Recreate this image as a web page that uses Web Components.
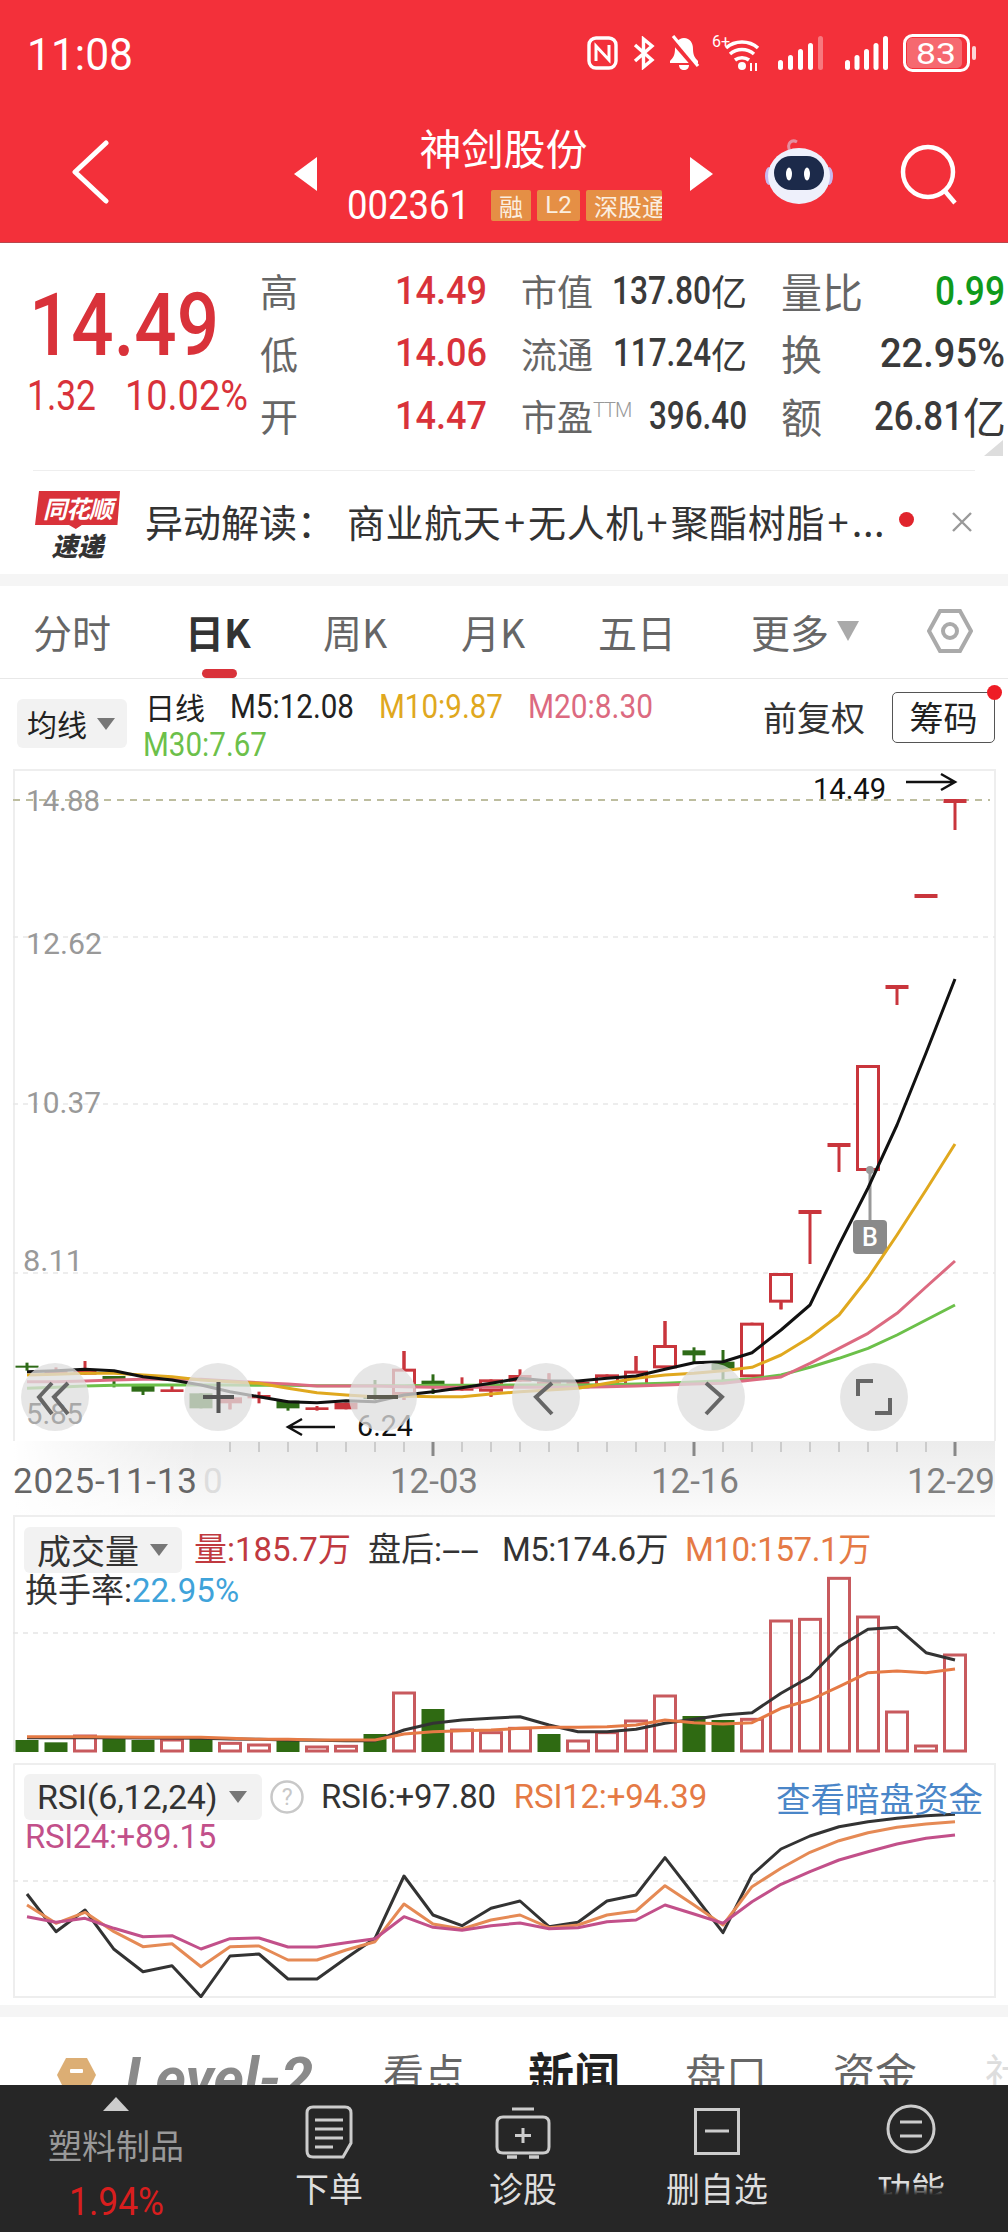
<!DOCTYPE html>
<html lang="zh"><head><meta charset="utf-8"><title>神剑股份</title>
<style>
html,body{margin:0;padding:0;background:#fff}
body{width:1008px;height:2232px;overflow:hidden;font-family:"Roboto","Noto Sans CJK SC",sans-serif}
x-app{display:block;width:1008px;height:2232px;overflow:hidden;position:relative}
</style></head><body>
<x-app>
  <x-statusbar></x-statusbar>
  <x-navbar></x-navbar>
  <x-quote>
    <x-qcell style="--ls:38px"><span slot="label">高</span><x-n class="r" t="14.49" w="92" fs="39" wt="500"></x-n></x-qcell>
    <x-qcell style="--ls:36px"><span slot="label">市值</span><x-n t="137.80" w="99" fs="39" wt="500"></x-n><small>亿</small></x-qcell>
    <x-qcell style="--ls:41px"><span slot="label">量比</span><x-n style="color:#0f9a1c" t="0.99" w="70" fs="41" wt="500"></x-n></x-qcell>
    <x-qcell style="--ls:38px"><span slot="label">低</span><x-n class="r" t="14.06" w="92" fs="39" wt="500"></x-n></x-qcell>
    <x-qcell style="--ls:36px"><span slot="label">流通</span><x-n t="117.24" w="98" fs="39" wt="500"></x-n><small>亿</small></x-qcell>
    <x-qcell style="--ls:41px"><span slot="label">换</span><x-n t="22.95%" w="125" fs="41" wt="500"></x-n></x-qcell>
    <x-qcell style="--ls:38px"><span slot="label">开</span><x-n class="r" t="14.47" w="92" fs="39" wt="500"></x-n></x-qcell>
    <x-qcell style="--ls:36px"><span slot="label">市盈<sup>TTM</sup></span><x-n t="396.40" w="98" fs="39" wt="500"></x-n></x-qcell>
    <x-qcell style="--ls:41px"><span slot="label">额</span><x-n t="26.81" w="89" fs="41" wt="500"></x-n><small style="font-size:43px;margin-right:-1px">亿</small></x-qcell>
  </x-quote>
  <x-news></x-news>
  <x-tabs></x-tabs>
  <x-legend></x-legend>
  <x-kchart></x-kchart>
  <x-timeaxis></x-timeaxis>
  <x-volume></x-volume>
  <x-rsi></x-rsi>
  <x-subtabs></x-subtabs>
  <x-dock></x-dock>
</x-app>
<script>
const CJK='"Noto Sans CJK SC",sans-serif';
customElements.define('x-n',class extends HTMLElement{
  constructor(){super();this.attachShadow({mode:'open'});}
  connectedCallback(){
    const w=+this.getAttribute('w'),fs=+this.getAttribute('fs'),t=this.getAttribute('t'),h=Math.round(fs*1.2);
    const wt=this.getAttribute('wt')||400;
    this.shadowRoot.innerHTML=`<style>:host{display:inline-block;width:${w}px;height:${h}px;vertical-align:middle;line-height:0;flex:none}svg{display:block;overflow:visible}</style><svg width="${w}" height="${h}"><text x="0" y="${h/2+.355*fs}" textLength="${w}" lengthAdjust="spacingAndGlyphs" font-family="Roboto" font-size="${fs}" font-weight="${wt}" fill="currentColor">${t}</text></svg>`;
  }
});
function def(name,html){customElements.define(name,class extends HTMLElement{
  constructor(){super();this.attachShadow({mode:'open'}).innerHTML=typeof html==='function'?html():html;}
});}
const X=k=>27+29*k;
const pts=(arr,f)=>arr.map((v,k)=>X(k)+','+f(v).toFixed(1)).join(' ');
const line=(arr,f,c,w)=>`<polyline points="${pts(arr,f)}" fill="none" stroke="${c}" stroke-width="${w}" stroke-linejoin="round"/>`;
const chev=`<svg width="18" height="14" viewBox="0 0 18 14"><path d="M0 1H18L9 13Z" fill="#777"/></svg>`;

def('x-statusbar',`<style>
:host{display:flex;align-items:center;height:106px;background:#f3303a;color:#fff;padding:0 31px 0 27px;box-sizing:border-box}
.t{flex:1;display:flex;margin-top:2px}
svg{display:block;flex:none}
</style>
<div class="t"><x-n t="11:08" w="106" fs="45"></x-n></div>
<svg width="31" height="34" viewBox="0 0 31 34" fill="none" stroke="#fff" stroke-width="3.4"><rect x="2" y="2" width="27" height="30" rx="7"/><path d="M9 25V10L22 24V9" stroke-width="3"/></svg>
<svg style="margin-left:14px" width="23" height="34" viewBox="0 0 23 34" fill="none" stroke="#fff" stroke-width="3.4"><path d="M3 9 20 24 11.5 31V3L20 10 3 25"/></svg>
<svg style="margin-left:13px" width="32" height="36" viewBox="0 0 32 36" fill="#fff"><path d="M16 3c-6 0-9 5-9 11 0 6-2 9-5 12v2h28v-2c-3-3-5-6-5-12 0-6-3-11-9-11Z"/><path d="M11 30h10c0 3-2 5-5 5s-5-2-5-5Z"/><path d="M3 3 29 33" stroke="#f3303a" stroke-width="6"/><path d="M5 1 30 31" stroke="#fff" stroke-width="3.2"/></svg>
<svg style="margin-left:12px" width="48" height="36" viewBox="0 0 48 36" fill="none" stroke="#fff" stroke-width="3.6"><text x="0" y="12" fill="#fff" stroke="none" font-family="Roboto" font-size="16">6+</text><path d="M14 13C23 5 37 5 46 13M18 19C25 13 35 13 42 19M23 25C27 22 33 22 37 25"/><circle cx="30" cy="31" r="4" fill="#fff" stroke="none"/><path d="M39 28v8M44 28v8" stroke-width="2"/></svg>
<svg style="margin-left:18px" width="45" height="34" viewBox="0 0 45 34" fill="#fff"><rect x="0" y="24" width="5" height="10" rx="2.5"/><rect x="10" y="19" width="5" height="15" rx="2.5"/><rect x="20" y="13" width="5" height="21" rx="2.5"/><rect x="30" y="7" width="5" height="27" rx="2.5"/><rect x="40" y="0" width="5" height="34" rx="2.5" opacity=".35"/></svg>
<svg style="margin-left:22px" width="43" height="34" viewBox="0 0 43 34" fill="#fff"><rect x="0" y="24" width="5" height="10" rx="2.5"/><rect x="9.5" y="19" width="5" height="15" rx="2.5"/><rect x="19" y="13" width="5" height="21" rx="2.5"/><rect x="28.5" y="7" width="5" height="27" rx="2.5"/><rect x="38" y="0" width="5" height="34" rx="2.5"/></svg>
<svg style="margin-left:15px" width="74" height="38" viewBox="0 0 74 38"><rect x="1.5" y="1.5" width="64" height="35" rx="8" fill="none" stroke="#fff" stroke-width="3"/><rect x="4" y="4" width="55" height="30" rx="5" fill="#fff" opacity=".28"/><rect x="69" y="12" width="4" height="14" rx="2" fill="#fff" opacity=".8"/><text x="33" y="30" text-anchor="middle" fill="#fff" font-family="Roboto" font-size="30" textLength="40" lengthAdjust="spacingAndGlyphs">83</text></svg>`);

def('x-navbar',`<style>
:host{display:grid;grid-template-columns:294px 23px 373px 23px 1fr;align-items:center;height:137px;background:#f3303a;color:#fff;border-bottom:1px solid #b9474c;box-sizing:border-box}
.mid{display:flex;flex-direction:column;align-self:start;padding-top:18px}
.n{font:400 42px/46px ${CJK};text-align:center}
.c{display:flex;align-items:center;height:34px;margin-top:18px;padding-left:30px}
.code{margin-right:21px}
.tag{background:#e58f45;height:31px;border-radius:2px;font:400 24px/31px ${CJK};color:#fbeee0;margin-right:6px;text-align:center}
.l2{width:43px;font-family:Roboto,sans-serif}
.clip{width:76px;overflow:hidden;white-space:nowrap;margin-right:0;text-align:left;padding-left:8px;box-sizing:border-box}
.right{display:flex;align-items:center;justify-content:flex-start}
svg{display:block}
</style>
<svg style="margin-left:72px;margin-top:-4px" width="38" height="64" viewBox="0 0 38 64" fill="none" stroke="#fff" stroke-width="5" stroke-linecap="round" stroke-linejoin="round"><path d="M34 3 3 32 34 61"/></svg>
<svg width="23" height="34" viewBox="0 0 23 34"><path d="M23 0V34L0 17Z" fill="#fff"/></svg>
<div class="mid"><div class="n">神剑股份</div>
<div class="c"><x-n class="code" t="002361" w="123" fs="40"></x-n><span class="tag" style="width:40px">融</span><span class="tag l2">L2</span><span class="tag clip">深股通</span></div></div>
<svg width="23" height="34" viewBox="0 0 23 34"><path d="M0 0V34L23 17Z" fill="#fff"/></svg>
<div class="right">
<svg style="margin-left:51px;margin-top:-4px" width="70" height="66" viewBox="0 0 70 66"><path d="M26 12C22 4 28 0 33 3" fill="none" stroke="#e48fa0" stroke-width="3"/><ellipse cx="5" cy="37" rx="4" ry="9" fill="#c7b7ee"/><ellipse cx="65" cy="37" rx="4" ry="9" fill="#c7b7ee"/><ellipse cx="35" cy="37" rx="31" ry="28" fill="#eef0fb"/><rect x="10" y="17" width="50" height="34" rx="17" fill="#1c2a4a"/><ellipse cx="25" cy="35" rx="3" ry="6.5" fill="#fff"/><ellipse cx="43" cy="35" rx="3" ry="6.5" fill="#fff"/></svg>
<svg style="margin-left:66px" width="60" height="62" viewBox="0 0 60 62" fill="none" stroke="#fff" stroke-width="4.5"><circle cx="28" cy="29" r="25"/><path d="M44 47 55 60"/></svg>
</div>`);

def('x-quote',`<style>
:host{display:grid;grid-template-columns:260px 1fr;height:227px;box-sizing:border-box;background:#fff;position:relative;color:#3a3a3a}
.left{padding-top:29px}
.p{color:#d9323a;padding-left:29px;height:104px}
.s{color:#d9323a;display:flex;margin-top:-6px;padding-left:27px}
.s x-n+x-n{margin-left:29px}
.g{display:grid;grid-template-columns:227px 226px 224px;column-gap:34px;padding-top:16px;align-content:start}
.tri{position:absolute;right:5px;top:197px}
</style>
<div class="left"><div class="p"><x-n t="14.49" w="190" fs="87" wt="500"></x-n></div><div class="s"><x-n t="1.32" w="69" fs="42"></x-n><x-n t="10.02%" w="123" fs="42"></x-n></div></div>
<div class="g"><slot></slot></div>
<svg class="tri" width="19" height="16" viewBox="0 0 19 16"><path d="M19 0V16H0Z" fill="#ddd"/></svg>`);

def('x-qcell',`<style>
:host{display:flex;justify-content:space-between;align-items:center;height:62.5px;white-space:nowrap}
.l{font:400 var(--ls,38px)/1 ${CJK};color:#666}
::slotted(small){font:400 36px/1 ${CJK}}
::slotted(.r){color:#d9323a}
.v{display:flex;align-items:center}
</style><div class="l"><slot name="label"></slot></div><div class="v"><slot></slot></div>`);
const ttm=document.querySelector('x-qcell span[slot=label] sup');
ttm.style.cssText='font:300 20px Roboto,sans-serif;color:#999;vertical-align:14px;letter-spacing:-1px;line-height:0';

def('x-news',`<style>
:host{display:flex;align-items:center;height:104px;box-sizing:border-box;padding:0 0 0 35px;position:relative;background:#fff}
:host::before{content:"";position:absolute;left:33px;right:33px;top:0;border-top:1px solid #eee}
.logo{width:85px;flex:none;display:flex;flex-direction:column;align-items:center;margin-top:6px}
.tagb{width:85px;height:38px;background:#d9323a;clip-path:polygon(4px 0,100% 0,97% 34px,55% 34px,48% 38px,40% 34px,0 34px);color:#fff;font:italic 700 24px/33px ${CJK};text-align:center;letter-spacing:-1px}
.sd{font:italic 900 26px/28px ${CJK};color:#333;margin-top:2px}
.t{font:400 38px/1 ${CJK};color:#333;margin-left:25px;white-space:nowrap;width:745px;flex:none;display:flex;margin-top:-2px}
.a{width:202px;flex:none}
.b{letter-spacing:.6px}
.b i{font-style:normal;padding:0 2.5px}
.dot{width:15px;height:15px;border-radius:50%;background:#e0242c;margin-left:9px;margin-top:-6px;flex:none}
svg{margin-left:37px;flex:none}
</style>
<div class="logo"><div class="tagb">同花顺</div><div class="sd">速递</div></div>
<div class="t"><span class="a">异动解读：</span><span class="b">商业航天<i>+</i>无人机<i>+</i>聚酯树脂<i>+</i>...</span></div>
<div class="dot"></div>
<svg width="22" height="22" viewBox="0 0 22 22" fill="none" stroke="#999" stroke-width="2.4"><path d="M2 2 20 20M20 2 2 20"/></svg>`);

def('x-tabs',`<style>
:host{display:block;height:105px;box-sizing:border-box;border-top:12px solid #f5f5f5;border-bottom:1px solid #e8e8e8;position:relative;font:400 39px/1 ${CJK};color:#666}
.w{display:grid;grid-template-columns:152px 138px 138px 137px 153px 176px 1fr;height:92px;align-items:center;padding-left:33px;box-sizing:border-box;white-space:nowrap;margin-top:-1px}
.on{font-weight:700;color:#333}
.bar{position:absolute;left:202px;top:83px;width:35px;height:9px;border-radius:5px;background:#d9323a}
.more{display:flex;align-items:center}
svg{display:block}
</style>
<div class="w"><div>分时</div><div class="on">日K</div><div>周K</div><div>月K</div><div>五日</div>
<div class="more">更多<svg style="margin-left:8px" width="22" height="20" viewBox="0 0 22 20"><path d="M0 0H22L11 20Z" fill="#aaa"/></svg></div>
<svg width="46" height="44" viewBox="0 0 46 44" fill="none" stroke="#aaa" stroke-width="4"><path d="M13 2H33L44 22 33 42H13L2 22Z"/><circle cx="23" cy="22" r="7"/></svg></div>
<div class="bar"></div>`);

def('x-legend',`<style>
:host{display:flex;height:90px;box-sizing:border-box;padding:0 13px 0 17px;background:#fff;color:#222;position:relative}
.chip{width:110px;height:49px;margin-top:20px;background:#f2f2f2;border-radius:6px;display:flex;align-items:center;padding-left:10px;box-sizing:border-box;font:400 30px/1 ${CJK};flex:none}
.chip span{margin-top:-2px}
.chip svg{margin-left:10px}
.txt{margin-left:16px;padding-top:8px;width:600px;display:flex;flex-wrap:wrap;column-gap:25px;row-gap:0;align-content:flex-start;align-items:center}
.l2{height:38px;display:flex;align-items:center}
.cn{font:400 30px/38px ${CJK};margin-left:2px;width:60px}
.br{flex-basis:100%;height:0}
.fq{font:400 34px/38px ${CJK};color:#333;margin-left:auto;margin-top:19px;height:40px}
.btn{position:relative;width:103px;height:51px;margin:13px 0 0 27px;box-sizing:border-box;border:1px solid #555;border-radius:5px;text-align:center;font:400 34px/48px ${CJK};flex:none}
.dot{position:absolute;right:-8px;top:-8px;width:15px;height:15px;background:#ee1c25;border-radius:50%}
</style>
<div class="chip"><span>均线</span>${chev}</div>
<div class="txt"><span class="cn">日线</span><span class="l2"><x-n t="M5:12.08" w="124" fs="33"></x-n></span><span class="l2" style="color:#e0a81e"><x-n t="M10:9.87" w="124" fs="33"></x-n></span><span class="l2" style="color:#dc6a80"><x-n t="M20:8.30" w="125" fs="33"></x-n></span><span class="br"></span><span class="l2" style="color:#6cc04a"><x-n t="M30:7.67" w="124" fs="33"></x-n></span></div>
<div class="fq">前复权</div><div class="btn">筹码<div class="dot"></div></div>`);

def('x-kchart',()=>{
 const R='#c9353c',G='#2e6b17';
 const P=p=>1280+p/3;
 const c=[[257,263,248,272,'g'],[272,284,262,284,'f'],[272,284,243,284,'f'],[288,300,288,322,'g'],[315,335,315,345,'g'],[328,336,316,336,'f'],[340,385,340,385,'g'],[352,370,352,388,'h'],[345,355,335,370,'f'],[362,385,362,392,'g'],[382,390,378,392,'f'],[368,388,368,388,'f'],[345,357,300,360,'g'],[266,345,213,360,'h'],[302,312,283,342,'g'],[322,332,292,332,'f'],[298,335,298,350,'h'],[285,305,268,305,'f'],[305,320,280,320,'h'],[305,325,305,325,'f'],[283,320,283,320,'h'],[272,320,228,320,'h'],[195,265,123,265,'h'],[211,226,202,250,'g'],[245,270,210,300,'g'],[128,292,128,292,'h'],[-21,68,-21,88,'h'],[-210,-198,-210,-48,'f'],[-411,-399,-411,-324,'f'],[-645,-327,-645,-327,'h'],[-885,-873,-885,-825,'f'],[-1158,-1146,-1158,-1146,'f'],[-1443,-1431,-1443,-1350,'f']];
 let s='';
 c.forEach((d,k)=>{const x=X(k),col=d[4]=='g'?G:R;
  s+=`<path d="M${x} ${P(d[2])}V${P(d[3])}" stroke="${col}" stroke-width="3"/>`;
  if(d[4]=='h')s+=`<rect x="${x-10.5}" y="${P(d[0])+1.5}" width="21" height="${(d[1]-d[0])/3-3}" fill="#fff" stroke="${col}" stroke-width="3"/><path d="M${x} ${P(d[2])}V${P(d[0])}M${x} ${P(d[1])}V${P(d[3])}" stroke="${col}" stroke-width="3"/>`;
  else s+=`<rect x="${x-11.5}" y="${P(d[0])}" width="23" height="${(d[1]-d[0])/3}" fill="${col}"/>`;
 });
 const bl=[275,272,268,272,290,300,315,335,350,365,368,362,365,345,335,323,310,295,303,303,295,288,268,248,245,218,150,75,-105,-276,-465,-681,-903];
 const or=[285,283,280,280,285,290,300,305,310,325,338,345,350,348,350,350,342,335,330,325,310,295,285,280,272,262,225,172,105,-6,-135,-270,-408];
 const pk=[305,305,303,300,298,298,298,303,308,312,318,318,318,320,322,322,322,322,322,322,320,318,315,312,310,300,291,250,205,160,100,21,-57];
 const gr=[325,322,318,316,315,315,315,315,316,316,317,317,317,317,316,316,316,315,315,315,314,312,310,306,302,296,285,262,235,205,165,120,75];
 const lines=line(gr,P,'#6cc04a',3)+line(pk,P,'#dc6a80',3)+line(or,P,'#e0a81e',3)+line(bl,P,'#111',3);
 const circ=[55,218,383,546,711,874].map(x=>`<circle cx="${x}" cy="1397" r="34" fill="#dedede" opacity=".76"/>`).join('');
 const ic=`<g fill="none" stroke="#666" stroke-width="4"><path d="M52 1383 39 1397 52 1414M68 1383 54 1397 68 1414"/><path d="M203 1397H234M218.500 1382V1413" stroke="#555"/><path d="M367 1397H398" stroke="#5c5c50"/><path d="M552 1383 536 1397 552 1414"/><path d="M706 1383 722 1397 706 1414"/><path d="M858 1396V1381H873M890 1398V1413H875"/></g>`;
 const grid=[937,1104,1273].map(y=>`<path d="M13 ${y}H995" stroke="#e8e8e8" stroke-width="1.500" stroke-dasharray="5 5"/>`).join('');
 const lab=(t,x,y,w)=>`<text x="${x}" y="${y}" font-family="Roboto" font-size="30" fill="#999" textLength="${w}" lengthAdjust="spacingAndGlyphs">${t}</text>`;
 return `<style>:host{display:block;height:672px}svg{display:block}</style>
 <svg width="1008" height="672" viewBox="0 769 1008 672">
 <path d="M14 1441V770H995V1441" fill="none" stroke="#eee" stroke-width="2"/>
 ${grid}
 <path d="M13 800H990" stroke="#bdbd9f" stroke-width="2" stroke-dasharray="7 6"/>
 ${lab('14.88',26,811,74)}${lab('12.62',26,954,76)}${lab('10.37',26,1113,75)}${lab('8.11',23,1271,60)}
 ${s}
 <path d="M870 1171V1222" stroke="#999" stroke-width="3"/><circle cx="870" cy="1170" r="4" fill="#999"/>
 <rect x="853" y="1220" width="34" height="34" rx="4" fill="#8a8a8a"/><text x="870" y="1246" text-anchor="middle" font-family="Roboto" font-size="25" font-weight="500" fill="#fff">B</text>
 ${lines}
 <text x="813" y="799" font-family="Roboto" font-size="30" fill="#111" textLength="73" lengthAdjust="spacingAndGlyphs">14.49</text>
 <path d="M906 782H954M941 774 955 782 941 790" fill="none" stroke="#111" stroke-width="2.500"/>
 <text x="357" y="1436" font-family="Roboto" font-size="30" fill="#111" textLength="56" lengthAdjust="spacingAndGlyphs">6.24</text>
 <path d="M335 1427H288M302 1419 288 1427 302 1435" fill="none" stroke="#111" stroke-width="2.500"/>
 ${circ}
 <text x="26" y="1424" font-family="Roboto" font-size="30" fill="#a8a8a8" textLength="57" lengthAdjust="spacingAndGlyphs">5.85</text>
 ${ic}
 </svg>`;
});

def('x-timeaxis',()=>{
 let t='';for(let k=7;k<33;k++){const thick=(k==14||k==23||k==32);const x=X(k);t+=`<path d="M${x} 1${thick?'V15':'V11'}" stroke="${thick?'#888':'#ccc'}" stroke-width="${thick?3:2}"/>`;}
 const lab=(s,x,w,c)=>`<text x="${x}" y="52" font-family="Roboto" font-size="35" fill="${c}" textLength="${w}" lengthAdjust="spacing">${s}</text>`;
 return `<style>:host{display:block;height:74px;position:relative;background:linear-gradient(90deg,#fff 13px,rgba(255,255,255,.7) 60px,rgba(255,255,255,0) 200px),linear-gradient(#ececec,#fbfbfb)}
 svg{display:block}</style>
 <svg width="1008" height="74" viewBox="0 0 1008 74"><rect x="995" y="0" width="13" height="74" fill="#fff"/><rect x="0" y="0" width="13" height="74" fill="#fff"/>${t}
 ${lab('2025-11-13',13,184,'#666')}<text x="203" y="52" font-family="Roboto" font-size="35" fill="#ddd">0</text>${lab('12-03',390,88,'#808080')}${lab('12-16',651,88,'#808080')}${lab('12-29',907,88,'#808080')}</svg>`;
});

def('x-volume',()=>{
 const P=p=>1510+p/3,B=1752;
 const tops=[690,697,675,686,690,687,686,697,702,692,708,706,672,546,597,657,665,652,672,690,665,630,555,618,630,625,330,325,202,318,603,705,432];
 const g=new Set([0,1,3,4,6,9,12,14,18,23,24]);
 let s='';tops.forEach((p,k)=>{const x=X(k),y=P(p);
  s+=g.has(k)?`<rect x="${x-11.5}" y="${y}" width="23" height="${B-y}" fill="#2f6a12"/>`:`<rect x="${x-10.5}" y="${y+1}" width="21" height="${B-y-2}" fill="none" stroke="#c85a5e" stroke-width="3"/>`;});
 const bl=[683,683,683,683,684,684,685,687,688,690,691,692,692,660,640,630,625,620,645,665,665,658,640,628,615,608,550,500,410,358,352,428,450];
 const or=[680,680,680,681,682,682,682,685,688,688,690,690,690,672,665,662,660,655,652,652,650,645,630,638,642,638,595,570,530,488,483,488,477];
 return `<style>:host{display:block;height:238px;position:relative;box-sizing:border-box;color:#333}
 svg.c{position:absolute;left:0;top:0}
 .h{position:relative;padding:12px 0 0 24px}
 .r1{display:flex;align-items:center;height:46px;white-space:nowrap;font:400 33px/46px Roboto,${CJK}}
 .chip{width:158px;height:46px;background:#f2f2f2;border-radius:6px;display:flex;align-items:center;padding-left:13px;box-sizing:border-box;font:400 34px/1 ${CJK};flex:none}
 .chip svg{margin-left:11px}
 .r2{font:400 33px/36px Roboto,${CJK};padding-left:1px}
 .f{flex:none;display:flex;align-items:center}
 </style>
 <svg class="c" width="1008" height="238" viewBox="0 1515 1008 238">
 <path d="M14 1752V1516H995" fill="none" stroke="#eee" stroke-width="2"/><path d="M13 1633H995" stroke="#e5e5e5" stroke-width="1.500" stroke-dasharray="5 5"/>
 ${s}${line(bl,P,'#333',3)}${line(or,P,'#e57a45',3)}</svg>
 <div class="h"><div class="r1"><div class="chip">成交量${chev}</div><span class="f" style="color:#c0393f;margin-left:12px;width:174px">量:185.7万</span><span class="f" style="width:134px">盘后:<x-n t="--" w="37" fs="33"></x-n></span><span class="f" style="width:183px;letter-spacing:-.6px">M5:174.6万</span><span class="f" style="color:#e57a45;letter-spacing:-.4px">M10:157.1万</span></div>
 <div class="r2">换手率:<span style="color:#3fa3da">22.95%</span></div></div>`;
});

def('x-rsi',()=>{
 const P=p=>1750+p/3;
 const bl=[432,545,480,598,665,647,740,618,612,687,687,625,565,378,495,527,475,453,530,517,453,435,323,435,548,375,297,258,230,215,205,197,193];
 const or=[465,520,487,545,590,581,650,590,588,630,630,600,575,462,522,537,510,495,533,525,495,483,407,465,525,410,355,307,272,248,232,222,215];
 const mg=[500,517,505,535,560,557,597,566,564,591,591,578,566,500,532,541,527,519,536,533,515,510,465,492,520,455,403,365,330,305,282,265,255];
 return `<style>:host{display:block;height:235px;margin-top:10px;position:relative;box-sizing:border-box;color:#333}
 svg.c{position:absolute;left:0;top:0}
 .h{position:relative;padding:11px 25px 0 24px}
 .r1{display:flex;align-items:center;height:46px;white-space:nowrap;font:400 33px/46px Roboto,sans-serif;letter-spacing:-.2px}
 .chip{width:238px;height:46px;background:#f2f2f2;border-radius:6px;display:flex;align-items:center;padding-left:13px;box-sizing:border-box;flex:none;font:400 34px/1 Roboto,sans-serif}
 .chip svg{margin-left:12px}
 .q{width:34px;height:34px;margin-left:8px;flex:none}
 .r2{font:400 33px/36px Roboto,sans-serif;color:#c2508a;padding-left:1px;margin-top:-1px;letter-spacing:-.4px}
 .go{margin-left:auto;color:#4a86c8;font:400 34.500px/46px ${CJK};letter-spacing:0}
 </style>
 <svg class="c" width="1008" height="235" viewBox="0 1763 1008 235">
 <path d="M14 1763.500V1997H995V1764H14" fill="none" stroke="#eee" stroke-width="2"/><path d="M13 1881H995" stroke="#e5e5e5" stroke-width="1.500" stroke-dasharray="5 5"/>
 ${line(bl,P,'#333',3)}${line(or,P,'#e58a55',3)}${line(mg,P,'#c2508a',3)}</svg>
 <div class="h"><div class="r1"><div class="chip">RSI(6,12,24)${chev}</div>
 <svg class="q" viewBox="0 0 34 34"><circle cx="17" cy="17" r="15.500" fill="none" stroke="#c8c8c8" stroke-width="2.500"/><text x="17" y="25" text-anchor="middle" font-family="Roboto" font-size="23" fill="#c8c8c8">?</text></svg>
 <span style="margin-left:17px">RSI6:+97.80</span><span style="color:#e57a45;margin-left:18px">RSI12:+94.39</span><span class="go">查看暗盘资金</span></div>
 <div class="r2">RSI24:+89.15</div></div>`;
});

def('x-subtabs',`<style>
:host{display:flex;height:80px;box-sizing:border-box;margin-top:7px;border-top:12px solid #f5f5f5;padding:31px 0 0 57px;overflow:hidden;white-space:nowrap;font:400 41px/46px ${CJK};color:#666}
svg{flex:none;margin-top:9px}
.lv{font:italic 700 58px/46px Roboto,sans-serif;color:#8a8a8a;margin-left:29px;margin-top:7px;width:258px;flex:none}
div{flex:none}
.a{width:145px}
.on{width:157px;font-size:46px;font-weight:700;color:#222}
.b{width:148px}
.c{width:152px;font-size:42px}
.d{color:#ddd}
</style>
<svg width="39" height="40" viewBox="0 0 39 40"><path d="M9 1H30L39 18 28 40H11L0 18Z" fill="#dcae74"/><rect x="13" y="12" width="13" height="4" rx="1" fill="#fff"/></svg>
<div class="lv">Level-2</div><div class="a">看点</div><div class="on">新闻</div><div class="b">盘口</div><div class="c">资金</div><div class="d">社</div>`);

def('x-dock',`<style>
:host{display:grid;grid-template-columns:232px repeat(4,194px);height:147px;background:#262626;color:#ddd;position:relative;overflow:hidden}
.i{display:flex;flex-direction:column;align-items:center;position:relative;height:147px}
.ic{height:62px;margin-top:20px;display:flex;align-items:flex-start;justify-content:center}
.l{font:400 34px/40px ${CJK};white-space:nowrap;margin-top:1px}
.tri{margin-top:12px}
.nm{font:400 34px/44px ${CJK};color:#999;margin-top:12px}
.pc{color:#d81e1e;margin-top:12px}
.sm{position:absolute;left:830px;right:0;top:100px;bottom:0;background:linear-gradient(180deg,rgba(38,38,38,0),#262626 10px)}
svg{display:block}
</style>
<div class="i"><svg class="tri" width="26" height="14" viewBox="0 0 26 14"><path d="M13 0 26 14H0Z" fill="#ccc"/></svg><div class="nm">塑料制品</div><x-n class="pc" t="1.94%" w="95" fs="38"></x-n></div>
<div class="i"><div class="ic"><svg width="48" height="54" viewBox="0 0 48 54" fill="none" stroke="#ccc" stroke-width="3"><path d="M8 2H40Q46 2 46 8V38L38 52H8Q2 52 2 46V8Q2 2 8 2Z"/><path d="M10 15H38M10 24H38M10 33H38M10 42H28"/></svg></div><div class="l">下单</div></div>
<div class="i"><div class="ic"><svg style="margin-top:2px" width="56" height="52" viewBox="0 0 56 52" fill="none" stroke="#ccc" stroke-width="3"><path d="M17 2H39M2 16Q2 10 8 10H48Q54 10 54 16V40Q54 46 48 46H8Q2 46 2 40Z"/><path d="M12 50H22M34 50H44" stroke-width="3.500"/><path d="M28 21V36M20 28.500H36"/></svg></div><div class="l">诊股</div></div>
<div class="i"><div class="ic"><svg style="margin-top:3px" width="46" height="47" viewBox="0 0 46 47" fill="none" stroke="#ccc" stroke-width="3"><rect x="1.500" y="1.500" width="43" height="44"/><path d="M11 23H35"/></svg></div><div class="l">删自选</div></div>
<div class="i"><div class="ic"><svg style="margin-top:-1px" width="50" height="50" viewBox="0 0 50 50" fill="none" stroke="#ccc" stroke-width="3"><circle cx="25" cy="25" r="23"/><path d="M14 18H36M14 32H36"/></svg></div><div class="l">功能</div></div>
<div class="sm"></div>`);
</script>
</body></html>
